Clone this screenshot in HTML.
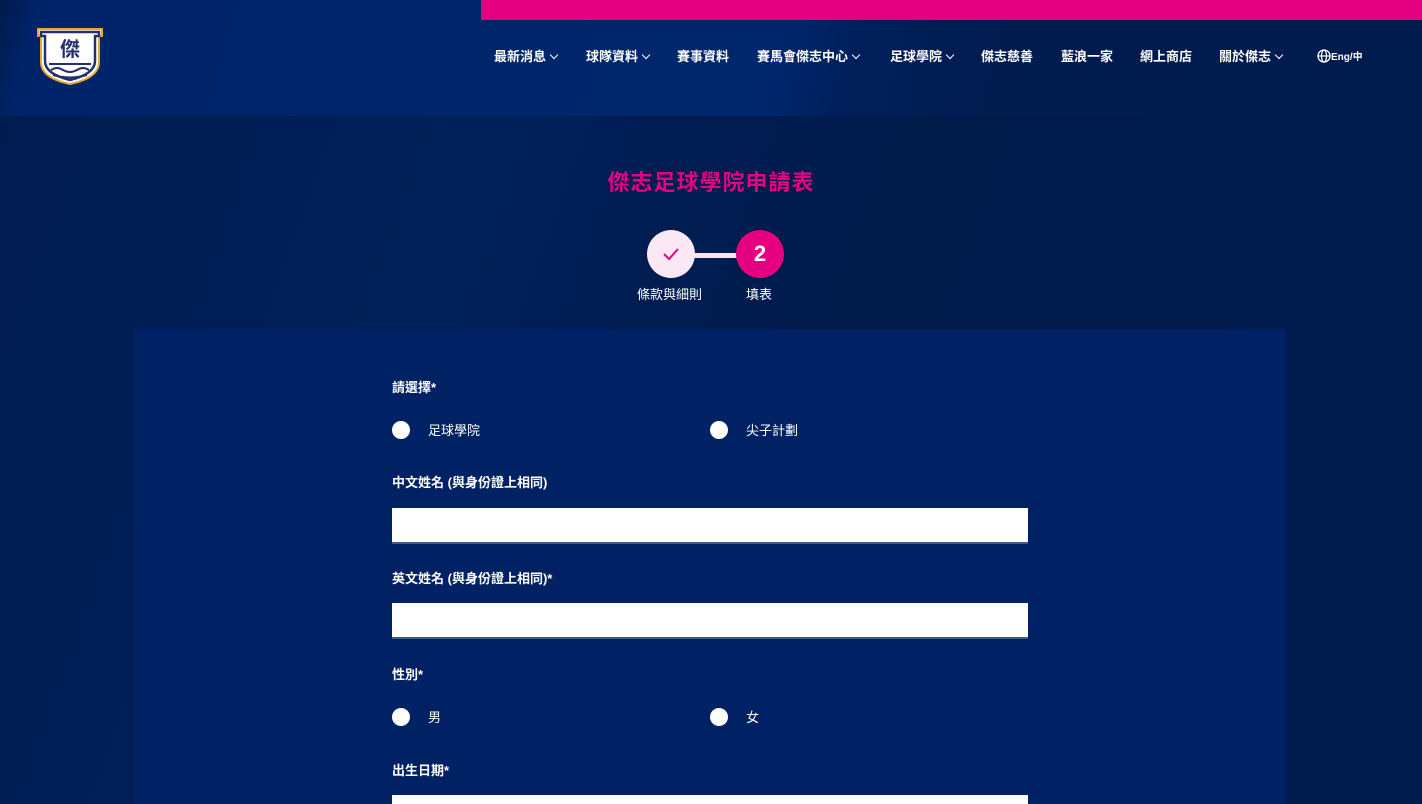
<!DOCTYPE html>
<html style="width:1422px;height:804px;overflow:hidden"><head><meta charset="utf-8"><style>
*{margin:0;padding:0;box-sizing:border-box}
body{width:1422px;height:804px;overflow:hidden;background:#001c4f;font-family:"Liberation Sans","Noto Sans CJK TC",sans-serif;color:#fff;position:relative}
.hdr{position:absolute;left:0;top:0;width:1422px;height:116px;background:linear-gradient(105deg,#001a4c 0,#00246a 3%,#00266c 55%,#001f5a 60%,#001c4f 70%)}
.pink{position:absolute;left:481px;top:0;width:941px;height:20px;background:#e4007f}
.bgglow{position:absolute;left:0;top:116px;width:1422px;height:688px;background:linear-gradient(110deg,#001c4f 0,#00205a 30%,#001a4a 55%,#001c4f 100%)}
.nav{position:absolute;top:46px;left:494px;display:flex;font-size:13px;font-weight:bold;white-space:nowrap}
.nav span{position:absolute}
.chev{display:inline-block;width:6px;height:6px;border-right:1.5px solid #fff;border-bottom:1.5px solid #fff;transform:rotate(45deg);margin-left:5px;position:relative;top:-3px}
h1{position:absolute;top:165px;left:0;width:1422px;text-align:center;font-size:22px;color:#e4007f;letter-spacing:1px}
.c{position:absolute;width:48px;height:48px;border-radius:50%;top:230px}
.lbl{position:absolute;top:284px;font-size:13px}
.panel{position:absolute;left:134px;top:329px;width:1152px;height:475px;background:#002264}
.f{position:absolute;font-size:13px;font-weight:bold}
.r{position:absolute;width:18px;height:18px;border-radius:50%;background:#fff}
.rt{position:absolute;font-size:13px}
.in{position:absolute;left:392px;width:636px;height:36px;background:#fff;border-bottom:2px solid #3a5a8a}
</style></head><body>
<div class="hdr"></div>
<div class="bgglow"></div>
<div class="pink"></div>
<svg style="position:absolute;left:37px;top:28px" width="66" height="57" viewBox="0 0 66 57">
<path d="M1 1H65V8H62V34Q62 50 33 56Q4 50 4 34V8H1Z" fill="#fff" stroke="#e8a82a" stroke-width="2"/>
<path d="M4 4H62V8H58V33Q58 46 33 52Q8 46 8 33V8H4Z" fill="none" stroke="#24306e" stroke-width="2.5"/>
<text x="33" y="28" font-size="20" font-weight="bold" text-anchor="middle" fill="#24306e" font-family="Noto Sans CJK TC">傑</text>
<path d="M12 36H54M14 42Q20 38 26 42Q33 46 40 42Q46 38 52 42M16 47Q33 52 50 47" stroke="#24306e" stroke-width="2" fill="none"/>
</svg>
<div class="nav">
<span style="left:0">最新消息<i class="chev"></i></span>
<span style="left:92px">球隊資料<i class="chev"></i></span>
<span style="left:183px">賽事資料</span>
<span style="left:263px">賽馬會傑志中心<i class="chev"></i></span>
<span style="left:396px">足球學院<i class="chev"></i></span>
<span style="left:487px">傑志慈善</span>
<span style="left:567px">藍浪一家</span>
<span style="left:646px">網上商店</span>
<span style="left:725px">關於傑志<i class="chev"></i></span>
<span style="left:823px;font-size:10px;top:2px">
<svg width="14" height="14" viewBox="0 0 14 14" style="vertical-align:-3px"><circle cx="7" cy="7" r="6" fill="none" stroke="#fff" stroke-width="1.3"/><ellipse cx="7" cy="7" rx="2.5" ry="6" fill="none" stroke="#fff" stroke-width="1.2"/><path d="M1 7H13" stroke="#fff" stroke-width="1.2"/></svg>Eng/中</span>
</div>
<h1>傑志足球學院申請表</h1>
<div style="position:absolute;left:692px;top:253px;width:46px;height:5px;background:#f7e3f1"></div>
<div class="c" style="left:647px;background:#fce8f5"><svg width="48" height="48"><path d="M17 24L22 29L31 19" stroke="#e4007f" stroke-width="2" fill="none"/></svg></div>
<div class="c" style="left:736px;background:#e4007f;text-align:center;line-height:48px;font-size:22px;font-weight:bold">2</div>
<div class="lbl" style="left:637px">條款與細則</div>
<div class="lbl" style="left:746px">填表</div>
<div class="panel"></div>
<div class="f" style="left:392px;top:377px">請選擇*</div>
<div class="r" style="left:392px;top:421px"></div><div class="rt" style="left:428px;top:420px">足球學院</div>
<div class="r" style="left:710px;top:421px"></div><div class="rt" style="left:746px;top:420px">尖子計劃</div>
<div class="f" style="left:392px;top:472px">中文姓名 (與身份證上相同)</div>
<div class="in" style="top:508px"></div>
<div class="f" style="left:392px;top:568px">英文姓名 (與身份證上相同)*</div>
<div class="in" style="top:603px"></div>
<div class="f" style="left:392px;top:664px">性別*</div>
<div class="r" style="left:392px;top:708px"></div><div class="rt" style="left:428px;top:707px">男</div>
<div class="r" style="left:710px;top:708px"></div><div class="rt" style="left:746px;top:707px">女</div>
<div class="f" style="left:392px;top:760px">出生日期*</div>
<div class="in" style="top:795px;height:9px;border:none"></div>
</body></html>
